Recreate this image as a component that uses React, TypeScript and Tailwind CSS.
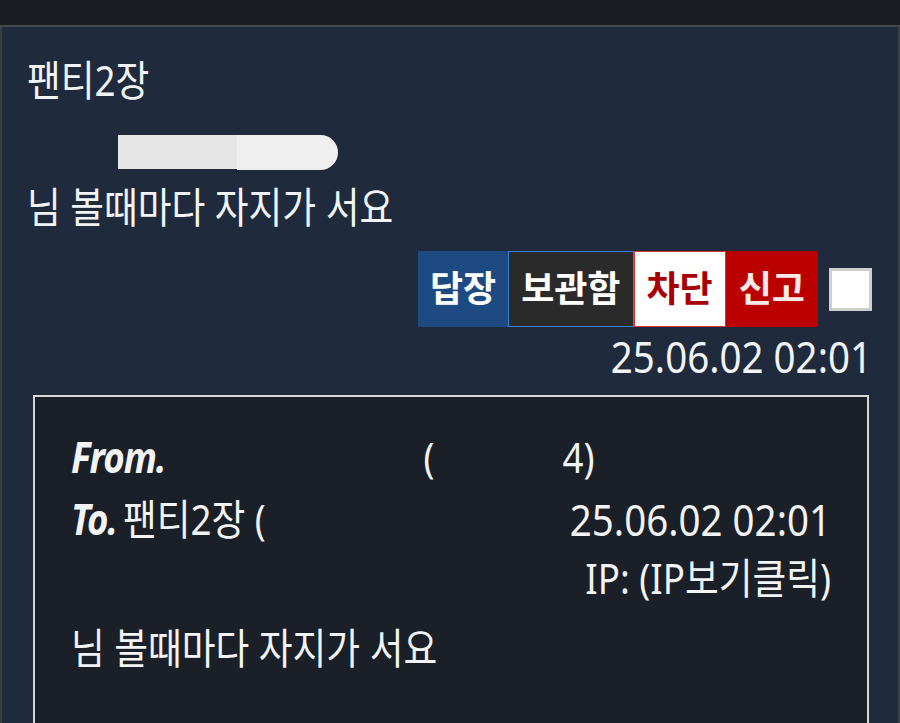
import React from "react";

export default function App() {
  return (
    <div className="w-[900px] h-[723px] overflow-hidden bg-[#1a1d23] text-[#f1f3f5] font-['Noto_Sans','Noto_Sans_CJK_KR',sans-serif]">
      <div className="h-[27px] bg-[#1a1d23] border-b-2 border-[#45484d]" />
      <div className="h-[696px] bg-[#1f2b3c] border-l-2 border-r-2 border-[#3a3f47] pl-[25px] pr-[26px] pt-[30px]">
        <div className="h-[46px] flex items-center text-[36.7px] leading-none">
          <span className="inline-block scale-y-[1.15]">팬티2장</span>
        </div>
        <div className="h-[81px] relative">
          <div className="absolute left-[91px] top-[32px] w-[120px] h-[34px] bg-[#e6e6e6]" />
          <div className="absolute left-[210px] top-[32px] w-[101px] h-[35px] bg-[#efefef] rounded-r-[18px]" />
        </div>
        <div className="h-[46px] flex items-center text-[36.7px] leading-none">
          <span className="inline-block scale-y-[1.15]">님 볼때마다 자지가 서요</span>
        </div>
        <div className="mt-[21px] h-[76px] flex justify-end items-stretch">
          <div className="flex items-center px-[12px] bg-[#1d4a80] text-white font-bold text-[36px] leading-none">답장</div>
          <div className="flex items-center px-[12px] bg-[#2a2a2a] border border-[#3b7fd8] text-white font-bold text-[36px] leading-none">보관함</div>
          <div className="flex items-center px-[12px] bg-white border border-[#d63030] text-[#a80000] font-bold text-[36px] leading-none">차단</div>
          <div className="flex items-center px-[13px] bg-[#bb0000] text-[#f7eaea] font-bold text-[36px] leading-none">신고</div>
          <div className="ml-[11px] self-center w-[43px] h-[43px] bg-white border-[3px] border-[#cfcfcf]" />
        </div>
        <div className="mt-[6px] h-[46px] flex items-center justify-end text-[38.5px] leading-none">
          <span className="inline-block scale-y-[1.15]">25.06.02 02:01</span>
        </div>
        <div className="mt-[16px] ml-[6px] mr-[3px] h-[340px] bg-[#1b1f27] border-2 border-[#d8d8d8] pl-[36px] pr-[36px] pt-[30px]">
          <div className="h-[60px] flex items-center text-[36.7px] leading-none">
            <span className="inline-block scale-y-[1.15] font-bold italic text-[36.7px] tracking-[-1px]">From.</span>
            <span className="inline-block scale-y-[1.15] ml-[258px]">(</span>
            <span className="inline-block scale-y-[1.15] ml-[128px]">4)</span>
          </div>
          <div className="mt-[2px] h-[60px] flex items-center text-[36.7px] leading-none">
            <span className="inline-block scale-y-[1.15] font-bold italic tracking-[-1px]">To.</span>
            <span className="inline-block scale-y-[1.15] ml-[6px]">팬티2장 (</span>
            <span className="inline-block scale-y-[1.15] ml-auto text-[38.5px]">25.06.02 02:01</span>
          </div>
          <div className="h-[58px] flex items-center justify-end text-[36.7px] leading-none">
            <span className="inline-block scale-y-[1.15]">IP: (IP보기클릭)</span>
          </div>
          <div className="mt-[11px] h-[60px] flex items-center text-[36.7px] leading-none">
            <span className="inline-block scale-y-[1.15]">님 볼때마다 자지가 서요</span>
          </div>
        </div>
      </div>
    </div>
  );
}
